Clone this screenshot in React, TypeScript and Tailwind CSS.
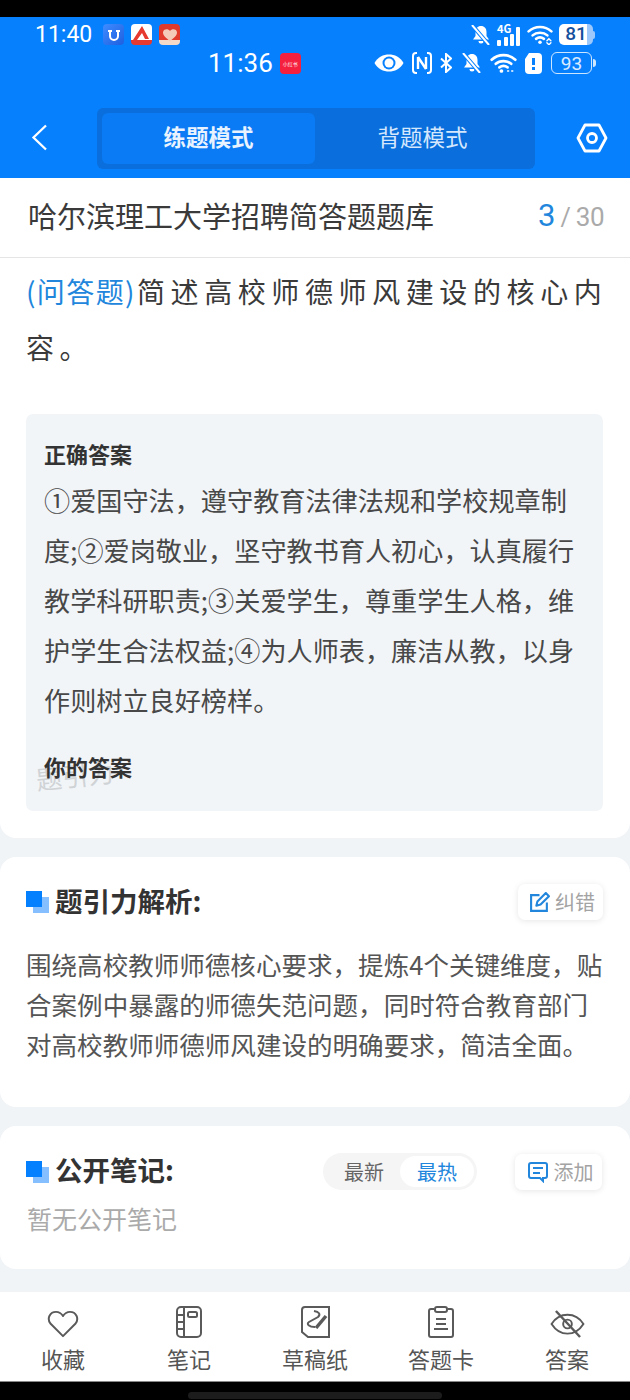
const cjk = { fontFamily: '"Noto Sans CJK SC", "Noto Sans", sans-serif' };

const BellOff = ({ size = 20 }: { size?: number }) => (
  <svg width={size} height={size} viewBox="0 0 20 20" fill="white">
    <path d="M10 1c3.400 0 5.500 2.500 5.500 6v4l2.500 3.500H2l2.500-3.500V7C4.500 3.500 6.600 1 10 1z" />
    <path d="M7.500 16h5a2.500 2.500 0 0 1-5 0z" />
    <path d="M1 0l17 20" stroke="#0780fe" strokeWidth="4" />
    <path d="M1 0l17 20" stroke="white" strokeWidth="2" />
  </svg>
);

const Wifi = ({ width = 26, small = false }: { width?: number; small?: boolean }) => (
  <svg width={width} height={width * 0.8} viewBox="0 0 26 21" fill="none" stroke="white" strokeWidth="2.600" strokeLinecap="round">
    <path d="M1.500 7.500C8 1.500 18 1.500 24.500 7.500" />
    <path d="M5.500 11.500C9.500 8 16.500 8 20.500 11.500" />
    <path d="M9 15c2.500-1.800 5.500-1.800 8 0" />
    <circle cx={small ? 11 : 13} cy="18.500" r="1.800" fill="white" stroke="none" />
    <path d={small ? "M17 18.500h1M21 18.500h1" : "M20 17l2-2 2 2M20 19l2 2 2-2"} strokeWidth="1.400" />
  </svg>
);

const Signal = () => (
  <div className="relative h-[22px] w-[24px]">
    <span className="absolute top-[-3px] left-0 text-[11px] leading-[14px] font-bold text-white" style={cjk}>
      4G
    </span>
    <svg width="24" height="22" viewBox="0 0 24 22" fill="white">
      <rect x="0" y="16" width="4" height="6" rx="1" />
      <rect x="7" y="13" width="4" height="9" rx="1" />
      <rect x="13" y="10" width="4" height="12" rx="1" />
      <rect x="19" y="3" width="4" height="19" rx="1" />
    </svg>
  </div>
);

const AppIcon = ({ bg, children }: { bg: string; children: React.ReactNode }) => (
  <div className="flex h-[21px] w-[21px] items-center justify-center overflow-hidden rounded-[4px]" style={{ background: bg }}>
    {children}
  </div>
);

const StatusBar = () => (
  <div className="relative h-[70px]">
    <div className="flex h-[34px] items-center justify-between pt-[1px] pr-[35px] pl-[35px]">
      <div className="flex items-center">
        <span className="w-[68px] text-[23px] leading-none text-white" style={{ fontFamily: "Roboto, sans-serif" }}>
          11:40
        </span>
        <div className="flex gap-[7px]">
          <AppIcon bg="linear-gradient(135deg,#3f8cff,#1d5fe0)">
            <svg width="14" height="14" viewBox="0 0 14 14" fill="none" stroke="white" strokeWidth="2">
              <path d="M3 2v6a4 4 0 0 0 8 0V2M1 3h4M9 3h4" />
            </svg>
          </AppIcon>
          <AppIcon bg="linear-gradient(#ffffff 76%,#e6392f 76%)">
            <svg width="19" height="19" viewBox="0 0 19 19" fill="#e6392f">
              <path d="M10 1l7 13h-4L10 8l-5 7H1z" />
            </svg>
          </AppIcon>
          <AppIcon bg="linear-gradient(#e2392d 78%,#f3d9c8 78%)">
            <svg width="18" height="18" viewBox="0 0 18 18" fill="#f5c9b8">
              <path d="M9 15C5 12 2 9.500 2 6.500 2 3 7 2 9 5c2-3 7-2 7 1.500 0 3-3 5.500-7 8.500z" />
            </svg>
          </AppIcon>
        </div>
      </div>
      <div className="flex items-center gap-[6px]">
        <BellOff />
        <Signal />
        <Wifi />
        <div className="flex items-center">
          <div className="flex h-[21px] w-[34px] items-center justify-center rounded-[5px] bg-[linear-gradient(90deg,#ffffff_82%,#9cc8fb_82%)] text-[19px] font-medium text-[#14509c]" style={{ fontFamily: "Roboto, sans-serif" }}>
            81
          </div>
          <div className="h-[8px] w-[2px] rounded-r bg-[#9cc8fb]" />
        </div>
      </div>
    </div>
    <div className="flex h-[24px] items-center justify-between pr-[34px] pl-[208px]">
      <div className="flex items-center gap-[7px]">
        <span className="text-[26px] leading-none text-white" style={{ fontFamily: "Roboto, sans-serif" }}>
          11:36
        </span>
        <div className="flex h-[21px] w-[21px] items-center justify-center rounded-[4px] bg-[#f5203e] text-[5px] leading-none text-white" style={cjk}>
          小红书
        </div>
      </div>
      <div className="flex items-center gap-[8px]">
        <svg width="30" height="20" viewBox="0 0 29 20">
          <path d="M0 10C3 4 9 1.500 14.500 1.500S26 4 29 10c-3 6-9 8.500-14.500 8.500S3 16 0 10z" fill="white" />
          <circle cx="14.500" cy="10" r="6.500" fill="#0780fe" />
          <circle cx="14.500" cy="10" r="4.500" fill="white" />
        </svg>
        <svg width="20" height="22" viewBox="0 0 20 22" fill="none" stroke="white" strokeWidth="2">
          <path d="M5 1H4a3 3 0 0 0-3 3v14a3 3 0 0 0 3 3h1M15 1h1a3 3 0 0 1 3 3v14a3 3 0 0 1-3 3h-1" />
          <path d="M6 5v12M14 5v12M6 5l8 12" strokeWidth="2.400" />
        </svg>
        <svg width="12" height="20" viewBox="0 0 12 20" fill="none" stroke="white" strokeWidth="2">
          <path d="M1 5.500l10 9L6 19V1l5 4.500-10 9" />
        </svg>
        <div className="ml-[2px]">
          <BellOff />
        </div>
        <Wifi width={27} small />
        <svg width="17" height="21" viewBox="0 0 17 21">
          <path d="M4 0h9a4 4 0 0 1 4 4v13a4 4 0 0 1-4 4H4a4 4 0 0 1-4-4V6z" fill="white" />
          <rect x="7" y="5" width="3" height="7" fill="#0780fe" />
          <rect x="7" y="14" width="3" height="3" fill="#0780fe" />
        </svg>
        <div className="ml-[1px] flex items-center">
          <div className="flex h-[22px] w-[41px] items-center justify-center rounded-[6px] border border-white/80 text-[19px] leading-none text-white/85" style={{ fontFamily: "Roboto, sans-serif" }}>
            93
          </div>
          <div className="ml-[1px] h-[8px] w-[3px] rounded-r bg-white/80" />
        </div>
      </div>
    </div>
  </div>
);

const TopBar = () => (
  <div className="flex h-[91px] items-start pt-[21px]">
    <div className="flex w-[97px] justify-start pt-[16px] pl-[31px]">
      <svg width="17" height="27" viewBox="0 0 17 27" fill="none" stroke="white" strokeWidth="2.300">
        <path d="M15 1.500L2.500 13.500 15 25.500" />
      </svg>
    </div>
    <div className="flex h-[61px] w-[438px] rounded-[6px] bg-[#0a6fdc] p-[5px] text-[22.500px]" style={cjk}>
      <div className="flex h-[51px] w-[213px] items-center justify-center rounded-[6px] bg-[#0a7bf4] pb-[3px] font-bold text-[#e9f3ff]">练题模式</div>
      <div className="flex h-[51px] flex-1 items-center justify-center pb-[3px] text-[#d4e7fd]">背题模式</div>
    </div>
    <div className="flex flex-1 justify-center pt-[15px] pl-[19px]">
      <svg width="32" height="30" viewBox="0 0 32 30" fill="none" stroke="white" strokeWidth="2.800">
        <path d="M9 2h14l7 13-7 13H9L2 15z" strokeLinejoin="round" />
        <circle cx="16" cy="15" r="4.500" />
      </svg>
    </div>
  </div>
);

const Square = () => (
  <div className="relative h-[22px] w-[23px] shrink-0">
    <div className="absolute top-[6px] left-[7px] h-[16px] w-[16px] bg-[#85bfff]" />
    <div className="absolute top-0 left-0 h-[16px] w-[16px] bg-[#0480fe]" />
  </div>
);

const ActionChip = ({ label, icon, wide }: { label: string; icon: React.ReactNode; wide?: boolean }) => (
  <div
    className={`flex h-[36px] items-center justify-center gap-[5px] rounded-[7px] bg-white pl-[3px] text-[20px] text-[#a3a3a3] shadow-[0_1px_6px_rgba(0,0,0,0.1)] ${
      wide ? "w-[87px]" : "w-[85px]"
    }`}
  >
    {icon}
    <span>{label}</span>
  </div>
);

const navIcons = [
  <svg width="32" height="28" viewBox="0 0 34 30" fill="none" stroke="#5a5a5a" strokeWidth="2.100" strokeLinejoin="round">
    <path d="M17 28L3.500 14.500C-.5 9 3 2 9.500 2 13 2 15.500 4 17 6.500 18.500 4 21 2 24.500 2 31 2 34.500 9 30.500 14.500z" />
  </svg>,
  <svg width="26" height="32" viewBox="0 0 26 32" fill="none" stroke="#5a5a5a" strokeWidth="2">
    <rect x="1" y="1" width="24" height="30" rx="4" />
    <path d="M8 1v30M1 9h7M1 16h7M1 23h7" />
    <rect x="12" y="6" width="9" height="5" rx="1.500" />
  </svg>,
  <svg width="29" height="32" viewBox="0 0 29 32" fill="none" stroke="#5a5a5a" strokeWidth="2">
    <path d="M4 1h24v30H7l-6-5V4a3 3 0 0 1 3-3z" />
    <path d="M13 5c5 1 7 3 4 6l-9 5c-3 2 0 5 6 5" />
    <path d="M25 10L15 22" strokeWidth="3.500" />
  </svg>,
  <svg width="28" height="32" viewBox="0 0 28 32" fill="none" stroke="#5a5a5a" strokeWidth="2">
    <path d="M7 3H4a2 2 0 0 0-2 2v24a2 2 0 0 0 2 2h20a2 2 0 0 0 2-2V5a2 2 0 0 0-2-2h-3" />
    <rect x="8" y="1" width="12" height="5" rx="2" />
    <path d="M9 13h10M9 18h10M7 23h14" />
  </svg>,
  <svg width="35" height="28" viewBox="0 0 36 29" fill="none" stroke="#5a5a5a" strokeWidth="2">
    <path d="M1.500 14.500C6 7.500 11 5 18 5s12 2.500 16.500 9.500C30 21.500 25 24.500 18 24.500S6 21.500 1.500 14.500z" />
    <circle cx="18" cy="14.500" r="4.500" />
    <path d="M6 1l25 27" strokeWidth="2.500" />
  </svg>,
];

const navLabels = ["收藏", "笔记", "草稿纸", "答题卡", "答案"];

export default function App() {
  return (
    <div className="flex h-[1400px] w-[630px] flex-col overflow-hidden bg-[#f1f4f7]" style={cjk}>
      <div className="h-[17px] shrink-0 bg-black" />
      <div className="h-[161px] shrink-0 bg-[#0780fe]">
        <StatusBar />
        <TopBar />
      </div>

      <div className="flex h-[80px] shrink-0 items-center justify-between border-b border-[#e5e5e5] bg-white pr-[26px] pb-[4px] pl-[28px]">
        <div className="text-[29px] leading-none text-[#3a3a3a]">哈尔滨理工大学招聘简答题题库</div>
        <div className="flex items-baseline" style={{ fontFamily: "Roboto, sans-serif" }}>
          <span className="text-[31px] leading-none text-[#2186dc]">3</span>
          <span className="ml-[5px] text-[25px] leading-none text-[#aaaaaa]">/</span>
          <span className="ml-[5px] text-[26px] leading-none tracking-[-0.5px] text-[#aaaaaa]">30</span>
        </div>
      </div>

      <div className="h-[580px] shrink-0 rounded-b-[16px] bg-white px-[26px]">
        <div className="-mr-[8px] h-[156px] pt-[5px] text-[28px] leading-[56px] tracking-[5.600px] text-[#3a3a3a]">
          <span className="mr-[1px] tracking-[1.400px] text-[#2186dc]">(问答题)</span>简述高校师德师风建设的核心内容。
        </div>
        <div className="mr-[1px] h-[397px] rounded-[7px] bg-[#f2f5f8] px-[18px] pt-[25px]">
          <div className="-mt-[2px] text-[22px] leading-[32px] font-bold text-[#333333]">正确答案</div>
          <div className="mt-[6px] text-[26.150px] leading-[50px] text-[#484848]">
            ①爱国守法，遵守教育法律法规和学校规章制度;②爱岗敬业，坚守教书育人初心，认真履行教学科研职责;③关爱学生，尊重学生人格，维护学生合法权益;④为人师表，廉洁从教，以身作则树立良好榜样。
          </div>
          <div className="relative mt-[25px] text-[22px] leading-[32px] font-bold text-[#333333]">
            <span className="absolute top-[12px] left-[-8px] -rotate-6 text-[26px] leading-none font-normal text-[#d0d3d6]">题引力</span>
            <span className="relative">你的答案</span>
          </div>
        </div>
      </div>

      <div className="mt-[19px] h-[250px] shrink-0 rounded-[16px] bg-white pt-[27px] pr-[27px] pl-[26px]">
        <div className="flex h-[36px] items-center justify-between">
          <div className="flex items-center gap-[6px]">
            <Square />
            <span className="pb-[3px] text-[27.500px] leading-none font-bold text-[#333333]">题引力解析:</span>
          </div>
          <ActionChip
            label="纠错"
            icon={
              <svg width="21" height="21" viewBox="0 0 20 20" fill="none" stroke="#2186dc" strokeWidth="2">
                <path d="M10 3H2v15h15v-8" />
                <path d="M7 13l1-4 8-8 3 3-8 8z" strokeLinejoin="round" />
              </svg>
            }
          />
        </div>
        <div className="-mr-[2px] mt-[24px] text-[25.550px] leading-[40px] text-[#555555]">
          围绕高校教师师德核心要求，提炼4个关键维度，贴合案例中暴露的师德失范问题，同时符合教育部门对高校教师师德师风建设的明确要求，简洁全面。
        </div>
      </div>

      <div className="mt-[19px] h-[143px] shrink-0 rounded-[16px] bg-white pt-[27px] pr-[28px] pl-[26px]">
        <div className="flex h-[37px] items-center justify-between">
          <div className="flex items-center gap-[6px]">
            <Square />
            <span className="pb-[3px] text-[27.500px] leading-none font-bold text-[#333333]">公开笔记:</span>
          </div>
          <div className="flex items-center gap-[38px]">
            <div className="flex h-[37px] w-[154px] items-center rounded-full bg-[#f5f5f5] p-[3px] text-[20px]">
              <div className="flex flex-1 justify-center pl-[2px] text-[#666666]">最新</div>
              <div className="flex h-[31px] w-[74px] items-center justify-center rounded-full bg-white text-[#2186dc]">最热</div>
            </div>
            <ActionChip
              wide
              label="添加"
              icon={
                <svg width="22" height="22" viewBox="0 0 22 22" fill="none" stroke="#2186dc" strokeWidth="2">
                  <path d="M4 2h14a2 2 0 0 1 2 2v11a2 2 0 0 1-2 2h-2v3l-3-3H4a2 2 0 0 1-2-2V4a2 2 0 0 1 2-2z" />
                  <path d="M6 7h10M6 12h7" />
                </svg>
              }
            />
          </div>
        </div>
        <div className="mt-[10px] pl-[1px] text-[25px] leading-[36px] text-[#aaaaaa]">暂无公开笔记</div>
      </div>

      <div className="mt-[23px] grid h-[90px] shrink-0 grid-cols-5 border-b border-[#888888] bg-white">
        {navLabels.map((label, i) => (
          <div key={label} className="flex flex-col items-center">
            <div className="flex h-[46px] items-end">{navIcons[i]}</div>
            <div className="mt-[7px] text-[22px] leading-[26px] text-[#555555]">{label}</div>
          </div>
        ))}
      </div>

      <div className="flex flex-1 justify-center bg-black pt-[10px]">
        <div className="h-[7px] w-[254px] rounded-full bg-[#1c1c1c]" />
      </div>
    </div>
  );
}
